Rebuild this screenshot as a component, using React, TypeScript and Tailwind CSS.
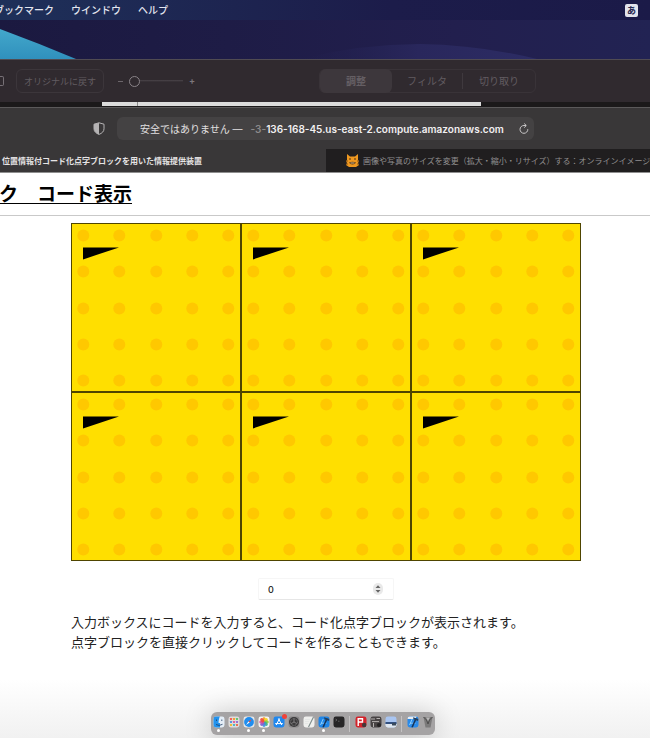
import React, { useState } from "react";

const SANS = "font-['Inter','Noto_Sans_CJK_JP',sans-serif]";
const SERIF = "font-['Liberation_Serif','Noto_Sans_CJK_JP',serif]";

const DOTS = [12, 48, 85, 121, 157];

function MenuBar() {
  return (
    <header className="flex h-5 items-center bg-linear-to-r from-[#1e3059] via-[#1c1c4a] via-60% to-[#1b1a48] text-[10px] leading-5 font-medium text-[#e4e6ef]">
      <nav className="flex items-center gap-[17px]">
        <button className="-ml-1.5">ブックマーク</button>
        <button>ウインドウ</button>
        <button>ヘルプ</button>
      </nav>
      <button className="mr-3 ml-auto flex size-[13px] items-center justify-center rounded-xs bg-[#e2e3ec] text-[9px] leading-none font-bold text-[#26264f]">
        あ
      </button>
    </header>
  );
}

function Wallpaper() {
  return (
    <svg
      className="block h-[39px] w-full"
      viewBox="0 0 650 39"
      preserveAspectRatio="none"
      aria-hidden="true"
    >
      <defs>
        <linearGradient id="sky" x1="0" x2="1" y1="0" y2="0">
          <stop offset="0" stopColor="#1b1940" />
          <stop offset="0.35" stopColor="#1e1c46" />
          <stop offset="0.7" stopColor="#221f4e" />
          <stop offset="1" stopColor="#222353" />
        </linearGradient>
        <linearGradient id="wave" x1="0" x2="0" y1="0" y2="1">
          <stop offset="0" stopColor="#43a8cb" />
          <stop offset="1" stopColor="#3090bd" />
        </linearGradient>
        <linearGradient id="hill" x1="0" x2="1" y1="0" y2="0">
          <stop offset="0" stopColor="#222150" stopOpacity="0" />
          <stop offset="0.5" stopColor="#29275c" />
          <stop offset="1" stopColor="#2c2c64" />
        </linearGradient>
      </defs>
      <rect width="650" height="39" fill="url(#sky)" />
      <path d="M300 39 Q360 24 420 24 Q480 25 537 39Z" fill="url(#hill)" />
      <path d="M0 9 Q38 23 76 39H0Z" fill="url(#wave)" />
    </svg>
  );
}

function EditorToolbar() {
  return (
    <div className="flex h-[43px] items-center border-t border-[#504b52] bg-[#302a2f] text-[10px] leading-none text-[#625c61]">
      <button aria-label="表示" className="h-2.5 w-1 rounded-r-xs border border-l-0 border-[#777176]" />
      <button className="ml-3 h-6 w-[88px] rounded-md border border-[#3c363b] text-[9px]">
        オリジナルに戻す
      </button>
      <div className="ml-3.5 flex items-center gap-1.5 text-[#7c767b]">
        <span className="h-px w-[5px] bg-[#6c666b]" />
        <input
          type="range"
          aria-label="ズーム"
          min={0}
          max={100}
          defaultValue={0}
          className="h-3 w-[54px] appearance-none bg-linear-to-b from-transparent from-[5px] via-[#4b454a] via-[5px] to-transparent to-[7px] [&::-webkit-slider-thumb]:size-[11px] [&::-webkit-slider-thumb]:appearance-none [&::-webkit-slider-thumb]:rounded-full [&::-webkit-slider-thumb]:border [&::-webkit-slider-thumb]:border-[#8a8489] [&::-webkit-slider-thumb]:bg-[#302a2f]"
        />
        <span className="-mt-px text-[9px] font-bold">+</span>
      </div>
      <div className="mr-[114px] ml-auto flex h-6 w-[217px] items-center rounded-md border border-[#393338]">
        <button className="-my-px h-6 w-[72px] rounded-md bg-[#3d373c] font-bold text-[#655f64]">調整</button>
        <button className="h-4 flex-1 border-r border-[#3f393e]">フィルタ</button>
        <button className="w-[72px]">切り取り</button>
      </div>
    </div>
  );
}

function WindowEdge() {
  return (
    <div className="flex h-[5px] bg-[#1b191a]">
      <div className="h-1 w-[102px]" />
      <div className="h-1 w-9 border-r border-[#8c8c8c] bg-[#dcdcdc]" />
      <div className="h-1 w-[343px] bg-[#dcdcdc]" />
    </div>
  );
}

function CatIcon() {
  return (
    <svg className="size-[13px] shrink-0" viewBox="0 0 13 13" aria-hidden="true">
      <path d="M1 0 4 2.5h5L12 0v6l1 1-1 2 1 2-3 2H3l-3-2 1-2-1-2 1-1Z" fill="#ee9820" />
      <path d="M3 4.5h2v1H3ZM8 4.5h2v1H8Z" fill="#4c2c0c" />
      <path d="M3 8.5Q6.5 7 10 8.5 9 10.5 6.5 10.5T3 8.5Z" fill="#5c3610" />
      <path d="M4.5 8.6h4v0.8h-4Z" fill="#f3d9ae" />
      <path d="M0 7h2M11 7h2M0 10h2M11 10h2" stroke="#6b3c12" strokeWidth="0.7" />
    </svg>
  );
}

function BrowserChrome() {
  return (
    <div className="border-t border-[#5b595a] bg-[#393738]">
      <div className="flex h-[41px] items-center">
        <button aria-label="プライバシー" className="ml-[93px]">
          <svg className="h-[13px] w-3" viewBox="0 0 12 13" aria-hidden="true">
            <path
              d="M6 0.8 11 2.2V6.8C11 9.4 9 11.3 6 12.4 3 11.3 1 9.4 1 6.8V2.2Z"
              fill="none"
              stroke="#b5b3b4"
              strokeWidth="1"
            />
            <path d="M6 0.8V12.4C3 11.3 1 9.4 1 6.8V2.2Z" fill="#b5b3b4" />
          </svg>
        </button>
        <div className="mr-[116px] ml-3 flex h-[23px] flex-1 items-center rounded-md bg-[#444243] pr-1 pl-[23px] text-[10px] leading-none whitespace-nowrap text-[#e2e0e1]">
          <span>安全ではありません —</span>
          <span className="ml-2 font-semibold text-[#f2f0f1]">
            <span className="text-[#8b898a]">-3-</span>136-168-45.us-east-2.compute.amazonaws.com
          </span>
          <button aria-label="再読み込み" className="ml-auto">
            <svg className="size-3" viewBox="0 0 12 12" fill="none" stroke="#c8c6c7" aria-hidden="true">
              <path d="M9.8 6.2A3.9 3.9 0 1 1 6 2.5H8" />
              <path d="M6.2 0.5 8.3 2.5 6.2 4.6" />
            </svg>
          </button>
        </div>
      </div>
      <div className="flex h-[23px] text-[8px] leading-none whitespace-nowrap">
        <button className="w-[326px] shrink-0 overflow-hidden pl-0.5 text-left font-bold text-[#e6e4e5]">
          位置情報付コード化点字ブロックを用いた情報提供装置
        </button>
        <button className="flex min-w-0 flex-1 items-center gap-1 overflow-hidden bg-[#201e1f] pl-5 text-left text-[#918f90]">
          <CatIcon />
          <span>画像や写真のサイズを変更（拡大・縮小・リサイズ）する：オンラインイメージコ</span>
        </button>
      </div>
    </div>
  );
}

function BrailleBlock({ index }: { index: number }) {
  return (
    <button aria-label={`点字ブロック ${index + 1}`} className="block h-[169px] border border-[#4f4500] bg-[#ffdf00]">
      <svg className="-m-px block h-[169px] w-[170px]" viewBox="0 0 170 169" aria-hidden="true">
        {DOTS.map((y) => DOTS.map((x) => <circle key={`${x}-${y}`} cx={x + 0.3} cy={y + 0.4} r="6" fill="#ffc800" />))}
        <path d="M12 24.4H48L12 36.4Z" fill="#000" />
      </svg>
    </button>
  );
}

function CodeField() {
  const [code, setCode] = useState(0);
  return (
    <div className="mx-auto mt-[17px] flex h-[22px] w-[136px] items-center rounded-xs border border-[#f6f6f6] border-b-[#e6e6e6] bg-white">
      <input
        type="number"
        aria-label="コード"
        value={code}
        onChange={(e) => setCode(Number(e.target.value))}
        className="w-0 flex-1 appearance-none bg-transparent pl-[9px] text-[9px] leading-none font-medium text-[#222] outline-none [&::-webkit-inner-spin-button]:appearance-none"
      />
      <div className="mr-2.5 flex h-3 w-2.5 flex-col items-center justify-center gap-0.5 rounded-full bg-[#e9e9e9]">
        <button aria-label="増やす" onClick={() => setCode(code + 1)}>
          <svg className="block h-[3px] w-1.5" viewBox="0 0 6 3" aria-hidden="true">
            <path d="M0.5 3 3 0.2 5.5 3Z" fill="#666" />
          </svg>
        </button>
        <button aria-label="減らす" onClick={() => setCode(Math.max(0, code - 1))}>
          <svg className="block h-[3px] w-1.5" viewBox="0 0 6 3" aria-hidden="true">
            <path d="M0.5 0 3 2.8 5.5 0Z" fill="#666" />
          </svg>
        </button>
      </div>
    </div>
  );
}

function Tile({ fill, children }: { fill: string; children?: React.ReactNode }) {
  return (
    <svg className="block size-3" viewBox="0 0 12 12" aria-hidden="true">
      <clipPath id={`tile-${fill.slice(1)}`}>
        <rect x="0.5" y="0.5" width="11" height="11" rx="2.4" />
      </clipPath>
      <g clipPath={`url(#tile-${fill.slice(1)})`}>
        <rect width="12" height="12" fill={fill} />
        {children}
      </g>
    </svg>
  );
}

const PETALS = ["#f7a01c", "#f4d51e", "#8fcb3c", "#3cb08a", "#3c8fe0", "#7e5fd0", "#d44fa4", "#ef4a3c"];
const PADS = ["#ef5a50", "#f59a2c", "#58c46a", "#4a90e2", "#e2589a", "#8c6bd8", "#f0b92e", "#3fb6c9", "#e86a4a"];

function DockApp({ name, running, children }: { name: string; running?: boolean; children: React.ReactNode }) {
  return (
    <button aria-label={name} className="flex w-[15px] flex-col items-center gap-px">
      {children}
      <span className={running ? "size-[3px] rounded-full bg-white" : "size-[3px]"} />
    </button>
  );
}

function DockRule() {
  return <span className="mx-[3px] h-4 w-px bg-[#c4c2c3]" />;
}

function Hammer() {
  return (
    <>
      <path d="M2.5 9 5.2 3M3 7.2H8.5" stroke="#9fdcff" strokeWidth="0.8" fill="none" />
      <path d="M9 2.5 5 11.5" stroke="#173458" strokeWidth="1.6" />
      <path d="M6 1.2 11.5 3 11 5 6.5 3.2Z" fill="#23405f" />
    </>
  );
}

function Dock() {
  return (
    <footer className="mt-auto flex justify-center bg-linear-to-b from-white to-[#f1f1f1] pt-8 pr-1 pb-[3px]">
      <div className="flex h-[23px] items-start rounded-md bg-[#a5a3a4] pt-1 shadow-[0_2px_28px_rgba(0,0,0,0.22)]">
        <DockApp name="Finder" running>
          <Tile fill="#e4edf6">
            <path d="M0 0H7C5.8 3 5.5 5 5.6 7H7V12H0Z" fill="#2393ee" />
            <path d="M3.5 3.5V5M8.8 3.5V5M3 8.5Q6 10.5 9.5 8.3" stroke="#1d3d66" strokeWidth="0.8" fill="none" />
          </Tile>
        </DockApp>
        <DockApp name="Launchpad">
          <Tile fill="#dfdddd">
            {PADS.map((c, i) => (
              <rect key={c} x={2 + (i % 3) * 3} y={2 + Math.floor(i / 3) * 3} width="2" height="2" rx="0.4" fill={c} />
            ))}
          </Tile>
        </DockApp>
        <DockApp name="Safari" running>
          <Tile fill="#e5e7ea">
            <circle cx="6" cy="6" r="4.9" fill="#1f8def" />
            <path d="M9 3 6.6 6.6 5.4 5.4Z" fill="#f04b3d" />
            <path d="M3 9 6.6 6.6 5.4 5.4Z" fill="#fff" />
          </Tile>
        </DockApp>
        <DockApp name="写真" running>
          <Tile fill="#f6f5f4">
            {PETALS.map((c, i) => (
              <ellipse key={c} cx="6" cy="3.6" rx="1.7" ry="2.5" fill={c} opacity="0.9" transform={`rotate(${i * 45} 6 6)`} />
            ))}
          </Tile>
        </DockApp>
        <DockApp name="App Store">
          <span className="relative block">
            <Tile fill="#2088ee">
              <path d="M6.6 2.5 3.2 9M5.4 2.5 8.8 9M2.2 7.6H9.8" stroke="#fff" strokeWidth="1" fill="none" />
            </Tile>
            <span className="absolute -top-0.5 -right-0.5 size-[5px] rounded-full bg-[#f04339]" />
          </span>
        </DockApp>
        <DockApp name="システム環境設定">
          <Tile fill="#8b898a">
            <circle cx="6" cy="6" r="5" fill="#3b3a3b" />
            <circle cx="6" cy="6" r="3.4" fill="none" stroke="#8d8b8c" strokeWidth="0.8" strokeDasharray="1 0.6" />
            <path d="M6 6V2.8M6 6 3.2 7.6M6 6 8.8 7.6" stroke="#9c9a9b" strokeWidth="0.7" />
          </Tile>
        </DockApp>
        <DockApp name="エディタ">
          <Tile fill="#efefed">
            <path d="M2 3.5H7M2 5.5H6M2 7.5H5" stroke="#dde0df" strokeWidth="0.6" />
            <path d="M10.5 1 5.5 11" stroke="#7e8c8b" strokeWidth="1.1" />
          </Tile>
        </DockApp>
        <DockApp name="Xcode" running>
          <Tile fill="#1f86e8">
            <Hammer />
          </Tile>
        </DockApp>
        <DockApp name="ターミナル">
          <Tile fill="#272627">
            <path d="M2.5 3 4 4 2.5 5M5 5.2H6.5" stroke="#8a8a8a" strokeWidth="0.6" fill="none" />
          </Tile>
        </DockApp>
        <DockRule />
        <DockApp name="パーキング">
          <Tile fill="#d3232a">
            <path d="M3.2 10V2.8H7.5V6H3.2" stroke="#fff" strokeWidth="1.4" fill="none" />
            <circle cx="9.2" cy="9" r="2.3" fill="#43393a" />
          </Tile>
        </DockApp>
        <DockApp name="ツール">
          <Tile fill="#474344">
            <path d="M1 3H5M6.5 2.5H10M2 5.6H9M3.5 7V11" stroke="#b5b1b0" strokeWidth="1" />
            <circle cx="9" cy="9" r="2" fill="#232122" />
          </Tile>
        </DockApp>
        <DockApp name="プレビュー">
          <Tile fill="#a9c5f1">
            <rect x="0" y="6" width="12" height="2" fill="#33507f" />
            <rect x="0" y="8" width="12" height="4" fill="#dfe6ee" />
            <rect x="7" y="7" width="4" height="2.5" rx="0.6" fill="#3a4a5c" />
          </Tile>
        </DockApp>
        <DockRule />
        <DockApp name="プロジェクト">
          <Tile fill="#2a8ae9">
            <path d="M0 0H10L8 3H0Z" fill="#e9edf2" />
            <Hammer />
          </Tile>
        </DockApp>
        <DockApp name="ゴミ箱">
          <svg className="block size-3" viewBox="0 0 12 12" aria-hidden="true">
            <path d="M1.5 1H10.5L8.5 11.5H3.5Z" fill="#7b7a7a" />
            <path d="M1.5 1 4.5 4 6 8 7.5 4 10.5 1" stroke="#4e4d4d" strokeWidth="1" fill="none" />
            <path d="M4 1.5H8L6 5Z" fill="#b9b8b8" />
          </svg>
        </DockApp>
      </div>
    </footer>
  );
}

export default function App() {
  return (
    <div className={`flex min-h-screen flex-col overflow-x-hidden bg-white ${SANS}`}>
      <MenuBar />
      <Wallpaper />
      <EditorToolbar />
      <WindowEdge />
      <BrowserChrome />
      <main className={`border-t border-[#8f8f8f] pl-0.5 text-black ${SERIF}`}>
        <h1 className="-ml-0.5 flex h-[43px] items-center border-b border-[#c9c9c9] pt-px text-[19px] leading-none font-bold whitespace-pre">
          <span className="-ml-px underline decoration-1 underline-offset-2">ク　コード表示</span>
        </h1>
        <div className="mx-auto mt-[7px] w-full max-w-[510px]">
          <div className="grid grid-cols-3">
            {[0, 1, 2, 3, 4, 5].map((i) => (
              <BrailleBlock key={i} index={i} />
            ))}
          </div>
          <div className={SANS}>
            <CodeField />
          </div>
          <p className="mt-[13px] text-[13px] leading-5 text-[#222]">
            入力ボックスにコードを入力すると、コード化点字ブロックが表示されます。
            <br />
            点字ブロックを直接クリックしてコードを作ることもできます。
          </p>
        </div>
      </main>
      <Dock />
    </div>
  );
}
